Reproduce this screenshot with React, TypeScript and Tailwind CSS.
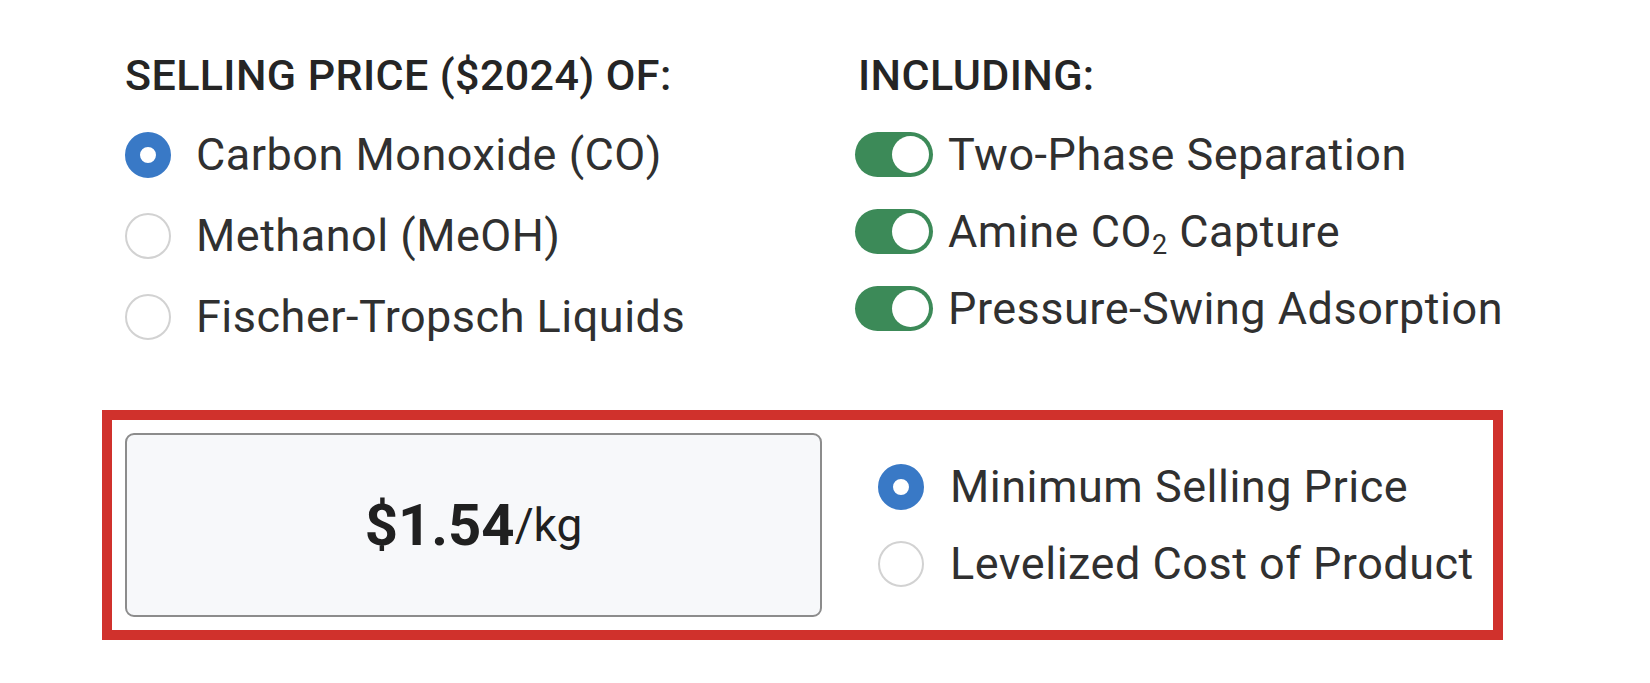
import React from "react";

const font = { fontFamily: "Roboto, 'Liberation Sans', sans-serif" };

const Radio = ({ checked }: { checked?: boolean }) =>
  checked ? (
    <span className="block w-[46px] h-[46px] shrink-0 rounded-full border-[15px] border-[#3979c6] bg-white" />
  ) : (
    <span className="block w-[46px] h-[46px] shrink-0 rounded-full border-2 border-[#d2d2d2] bg-white" />
  );

const Toggle = () => (
  <span className="relative block w-[78px] h-[45px] shrink-0 rounded-full bg-[#3c8a58]">
    <span className="absolute right-[4px] top-[4px] w-[37px] h-[37px] rounded-full bg-white" />
  </span>
);

export default function App() {
  const products = [
    { label: "Carbon Monoxide (CO)", checked: true },
    { label: "Methanol (MeOH)" },
    { label: "Fischer-Tropsch Liquids" },
  ];

  const options = [
    <>Two-Phase Separation</>,
    <>
      Amine CO<sub className="text-[27px]">2</sub> Capture
    </>,
    <>Pressure-Swing Adsorption</>,
  ];

  return (
    <div className="w-[1650px] h-[683px] bg-white text-[#303030]" style={font}>
      <div className="flex pt-[51px] pl-[125px]">
        {/* product choice */}
        <div className="w-[730px]">
          <h3 className="h-[48px] leading-[48px] text-[43px] tracking-[0.4px] font-medium text-[#252525]">
            SELLING PRICE ($2024) OF:
          </h3>
          <div className="mt-[15px]">
            {products.map((p, i) => (
              <label key={i} className="flex items-center h-[81px] gap-[25px] text-[45px] tracking-[0.5px]">
                <Radio checked={p.checked} />
                <span>{p.label}</span>
              </label>
            ))}
          </div>
        </div>

        {/* included units */}
        <div>
          <h3 className="h-[48px] leading-[48px] text-[43px] tracking-[0.4px] font-medium text-[#252525] pl-[3px]">
            INCLUDING:
          </h3>
          <div className="mt-[17px]">
            {options.map((o, i) => (
              <div key={i} className="flex items-center h-[77px] gap-[15px] text-[45px] tracking-[0.5px]">
                <Toggle />
                <span>{o}</span>
              </div>
            ))}
          </div>
        </div>
      </div>

      <div className="ml-[102px] mt-[53px] w-[1401px] h-[230px] border-[10px] border-[#d0312c] p-[13px] flex">
        <div className="w-[697px] h-full rounded-[9px] border-2 border-[#8c8c8c] bg-[#f7f8fa] flex items-center justify-center text-[#202020]">
          <span className="text-[58px] font-bold leading-none">$1.54</span>
          <span className="text-[46px] leading-none">/kg</span>
        </div>
        <div className="ml-[56px] flex flex-col justify-center">
          <label className="flex items-center h-[77px] gap-[26px] text-[45px] tracking-[0.5px]">
            <Radio checked />
            <span>Minimum Selling Price</span>
          </label>
          <label className="flex items-center h-[77px] gap-[26px] text-[45px] tracking-[0.5px]">
            <Radio />
            <span>Levelized Cost of Product</span>
          </label>
        </div>
      </div>
    </div>
  );
}
